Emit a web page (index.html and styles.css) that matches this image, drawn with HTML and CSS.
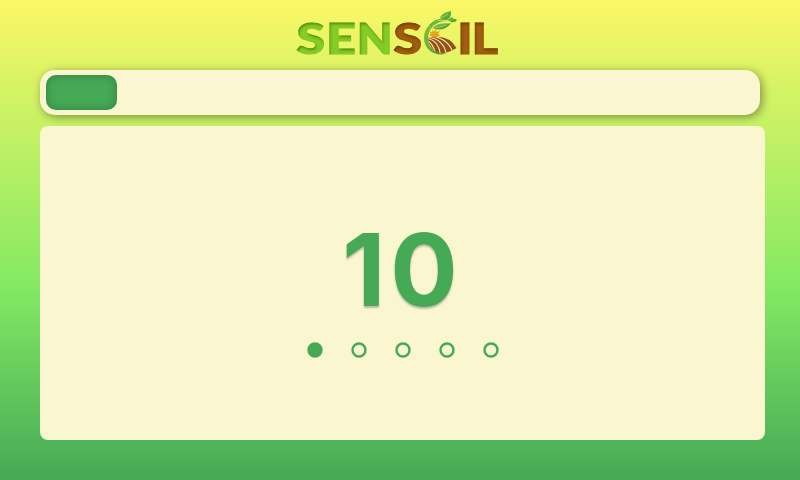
FILE: index.html
```html
<!DOCTYPE html>
<html lang="en">
<head>
<meta charset="utf-8">
<title>Sensoil</title>
<link rel="stylesheet" href="styles.css">
</head>
<body>
<header class="header">
<svg class="logo" viewBox="292 8 212 54" role="img" aria-label="Sensoil">
  <defs>
    <filter id="inset" x="-10%" y="-10%" width="120%" height="130%">
      <feOffset in="SourceAlpha" dx="0.5" dy="2" result="o"/>
      <feGaussianBlur in="o" stdDeviation="1.3" result="b"/>
      <feComposite in="SourceAlpha" in2="b" operator="out" result="inner"/>
      <feFlood flood-color="#1f3300" flood-opacity=".6"/>
      <feComposite in2="inner" operator="in" result="shade"/>
      <feMerge><feMergeNode in="SourceGraphic"/><feMergeNode in="shade"/></feMerge>
    </filter>
    <linearGradient id="leaf" x1="0" y1="0" x2="1" y2="1"><stop offset="0" stop-color="#8bc43a"/><stop offset="1" stop-color="#3f9a35"/></linearGradient>
    <clipPath id="field"><path d="M427.500 38Q448 33 456.500 48Q449 53 439 53.500Q430 50 427.500 38Z"/></clipPath>
  </defs>
  <g class="word green" filter="url(#inset)">
    <text x="296.500" y="53.500" textLength="28.500" lengthAdjust="spacingAndGlyphs">S</text>
    <text x="326.300" y="53.500" textLength="29.500" lengthAdjust="spacingAndGlyphs">E</text>
    <text x="357" y="53.500" textLength="35.500" lengthAdjust="spacingAndGlyphs">N</text>
  </g>
  <g class="word brown" filter="url(#inset)">
    <text x="393.500" y="53.500" textLength="28.500" lengthAdjust="spacingAndGlyphs">S</text>
    <text x="457.600" y="53.500" textLength="15" lengthAdjust="spacingAndGlyphs">I</text>
    <text x="471.800" y="53.500" textLength="26.200" lengthAdjust="spacingAndGlyphs">L</text>
  </g>
  <path fill="url(#leaf)" d="M448 21.500C438 20 428.500 27 428 38C428 48 435 54 447 53.500C436 57.500 424 50 424 38C424 25 436 17.500 448 21.500Z"/>
  <path fill="none" stroke="#51a43b" stroke-width="1.200" d="M430 25Q436 19 443 19Q449 20 453 21"/>
  <path fill="url(#leaf)" d="M451 11Q452 18 446 19.500Q442 20 440 18Q441 13 451 11Z"/>
  <path fill="url(#leaf)" d="M432.500 28Q437 22 451 23.500Q446 30 438 29.500Q435 29.500 432.500 28Z"/>
  <path fill="url(#leaf)" d="M448 20Q448.500 17.500 453 17L453 19Q455 18 457 20Q455 23 451 22Z"/>
  <path fill="none" stroke="#dceb87" stroke-width=".5" d="M441 18L448 14M434 28Q440 27 446 25"/>
  <g fill="#e4a51b"><circle cx="434.500" cy="35" r="3.200"/><path d="M428.500 35L431 34L429 31L432 32.500L432.500 29.500L434 32L436 29.300L436.500 32L440 31L438 34L440.500 35.500L434 37Z"/></g>
  <g clip-path="url(#field)">
    <path fill="#96501a" d="M424 32H460V56H424Z"/>
    <path fill="none" stroke="#f4edab" stroke-width="1.100" d="M427 40.500Q433 43 435.500 54M428 38.500Q439 41 440.500 55M429 37.200Q444 39.500 446.500 55M433 36.200Q449 39.500 453 53"/>
  </g>
</svg>
</header>
<main>
  <div class="progress"><div class="progress-fill"></div></div>
  <section class="panel">
    <div class="count">10</div>
    <svg class="dots" viewBox="0 0 192 16">
      <circle class="dot active" cx="8" cy="8" r="6.500"/>
      <circle class="dot" cx="52" cy="8" r="6.500"/>
      <circle class="dot" cx="96" cy="8" r="6.500"/>
      <circle class="dot" cx="140" cy="8" r="6.500"/>
      <circle class="dot" cx="184" cy="8" r="6.500"/>
    </svg>
  </section>
</main>
</body>
</html>
```

FILE: styles.css
```css
* { box-sizing: border-box; }
body {
  margin: 0;
  height: 480px;
  padding: 8px 35px 40px 40px;
  overflow: hidden;
  background: linear-gradient(#fbf766 0%, #83e963 60%, #45a956 100%);
  font-family: Inter, sans-serif;
}
.header { height: 62px; padding-left: 252px; }
.logo { display: block; width: 212px; height: 54px; }
.word { font: 900 42px Lato, sans-serif; stroke-width: 1.2px; }
.green { fill: #84cc27; stroke: #84cc27; }
.brown { fill: #a15b12; stroke: #a15b12; }
.progress {
  width: 720px;
  height: 45px;
  padding: 5px 6px;
  border-radius: 15px;
  background: #faf6d0;
  box-shadow: 2px 2px 10px rgba(0, 0, 0, .4);
}
.progress-fill {
  width: 71px;
  height: 35px;
  border-radius: 10px;
  background: #45a956;
  box-shadow: inset 0 0 10px rgba(0, 0, 0, .25);
}
.panel {
  display: flex;
  flex-direction: column;
  align-items: center;
  height: 314.4px;
  margin-top: 11px;
  padding: 94px 0 0;
  border-radius: 8px;
  background: #faf6d0;
}
.count {
  height: 100px;
  font-size: 100px;
  font-weight: 700;
  line-height: 100px;
  letter-spacing: 5px;
  color: #45a956;
  text-shadow: 0 2px 2px rgba(0, 0, 0, .25);
}
.dots { display: block; width: 192px; height: 16px; margin: 22px 0 0 1px; }
.dot { fill: none; stroke: #45a956; stroke-width: 2.4px; }
.active { fill: #45a956; }
```
